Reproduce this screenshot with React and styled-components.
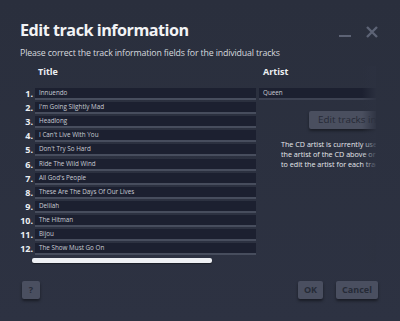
import React from "react";
import styled, { createGlobalStyle } from "styled-components";

const Global = createGlobalStyle`
  html, body { margin: 0; padding: 0; background: #2c3140; }
  #root { width: 400px; height: 321px; overflow: hidden; }
  * { box-sizing: border-box; }
`;

const Dialog = styled.div`
  width: 400px;
  height: 321px;
  background: linear-gradient(180deg, #2a2f3d 0%, #2d3242 100%);
  font-family: "Open Sans", "Noto Sans", sans-serif;
  color: #e8eaee;
  display: flex;
  flex-direction: column;
  padding: 19px 20px 0 20px;
`;

const HeaderRow = styled.div`
  display: flex;
  align-items: flex-start;
  justify-content: space-between;
`;

const Title = styled.h1`
  margin: 0;
  font-size: 16.2px;
  letter-spacing: -0.5px;
  line-height: 22px;
  font-weight: 700;
  color: #f2f3f5;
`;

const WinControls = styled.div`
  display: flex;
  align-items: center;
  gap: 15px;
  margin-top: 7px;
  margin-right: 2px;
`;

const Subtitle = styled.div`
  font-size: 8.8px;
  letter-spacing: -0.15px;
  line-height: 14px;
  margin-top: 5px;
  color: #d6d9df;
`;

const Body = styled.div`
  display: grid;
  grid-template-columns: 223px 117px;
  column-gap: 3px;
  margin-left: 13px;
  margin-top: 6px;
  width: 343px;
`;

const ColHeader = styled.div`
  font-size: 9px;
  font-weight: 700;
  line-height: 12px;
  padding-left: ${p => p.$pad}px;
  color: #eef0f3;
`;

const List = styled.div`
  display: flex;
  flex-direction: column;
  gap: 2px;
  margin-top: 10px;
`;

const Row = styled.div`
  display: flex;
  align-items: center;
  height: 12.1px;
`;

const Num = styled.span`
  width: 0;
  display: flex;
  justify-content: flex-end;
  font-size: 9px;
  line-height: 10px;
  font-weight: 700;
  padding-right: 2px;
  color: #eceef2;
  white-space: nowrap;
`;

const Field = styled.div`
  flex: 1;
  height: 12px;
  background: #1c2030;
  border-bottom: 2px solid #474d5d;
  font-size: 6.3px;
  line-height: 10px;
  padding-left: 4px;
  color: #c9ccd4;
  white-space: nowrap;
  overflow: hidden;
`;

const Scrollbar = styled.div`
  width: 180px;
  height: 5px;
  margin-top: 3px;
  margin-left: -1px;
  border-radius: 2px;
  background: #eef0f4;
  box-shadow: 0 1px 1px rgba(0,0,0,0.4);
`;

const RightCol = styled.div`
  overflow: hidden;
  position: relative;
  display: flex;
  flex-direction: column;
`;

const ArtistField = styled(Field)`
  flex: none;
  width: 140px;
  margin-top: 10px;
  border-bottom-color: #3d4252;
`;

const Fade = styled.div`
  position: absolute;
  top: 0;
  right: 0;
  width: 14px;
  height: 100%;
  background: linear-gradient(90deg, rgba(44,49,64,0) 0%, rgba(44,49,64,0.9) 100%);
`;

const EditBtn = styled.div`
  margin-top: 11px;
  margin-left: 50px;
  width: 90px;
  height: 18px;
  background: #4a4f5f;
  border-radius: 2px;
  box-shadow: 0 2px 3px rgba(0,0,0,0.4);
  color: #262a36;
  font-size: 9.8px;
  line-height: 18px;
  padding-left: 9px;
  white-space: nowrap;
`;

const Para = styled.p`
  margin: 10px 0 0 22px;
  width: 160px;
  font-size: 7.2px;
  line-height: 10px;
  color: #e6e8ec;
  white-space: nowrap;
`;

const Footer = styled.div`
  display: flex;
  align-items: center;
  margin-top: 18px;
  padding-left: 2px;
`;

const Btn = styled.div`
  height: 18px;
  min-width: ${p => p.$w}px;
  padding: 0 ${p => p.$px || 0}px;
  background: #4a4f60;
  border-radius: 2px;
  box-shadow: 0 2px 3px rgba(0,0,0,0.45);
  color: #262b37;
  font-size: 9px;
  font-weight: 700;
  line-height: 18px;
  text-align: center;
  margin-left: ${p => p.$ml || 0}px;
`;

const tracks = [
  "Innuendo",
  "I'm Going Slightly Mad",
  "Headlong",
  "I Can't Live With You",
  "Don't Try So Hard",
  "Ride The Wild Wind",
  "All God's People",
  "These Are The Days Of Our Lives",
  "Delilah",
  "The Hitman",
  "Bijou",
  "The Show Must Go On",
];

export default function App() {
  return (
    <>
      <Global />
      <Dialog>
        <HeaderRow>
          <Title>Edit track information</Title>
          <WinControls>
            <svg width="12" height="12" viewBox="0 0 12 12">
              <rect x="0" y="9" width="12" height="2" fill="#5d6375" />
            </svg>
            <svg width="12" height="12" viewBox="0 0 12 12">
              <path d="M1 1 L11 11 M11 1 L1 11" stroke="#5d6375" strokeWidth="2.4" />
            </svg>
          </WinControls>
        </HeaderRow>
        <Subtitle>Please correct the track information fields for the individual tracks</Subtitle>
        <Body>
          <div>
            <ColHeader $pad={5}>Title</ColHeader>
            <List>
              {tracks.map((t, i) => (
                <Row key={i}>
                  <Num>{i + 1}.</Num>
                  <Field>{t}</Field>
                </Row>
              ))}
            </List>
            <Scrollbar />
          </div>
          <RightCol>
            <ColHeader $pad={4}>Artist</ColHeader>
            <ArtistField>Queen</ArtistField>
            <EditBtn>Edit tracks info</EditBtn>
            <Para>
              The CD artist is currently used for all tracks.<br />
              the artist of the CD above or press the button<br />
              to edit the artist for each track individually.
            </Para>
            <Fade />
          </RightCol>
        </Body>
        <Footer>
          <Btn $w={18}>?</Btn>
          <Btn $w={25} $ml={258}>OK</Btn>
          <Btn $w={42} $ml={13} $px={6}>Cancel</Btn>
        </Footer>
      </Dialog>
    </>
  );
}
